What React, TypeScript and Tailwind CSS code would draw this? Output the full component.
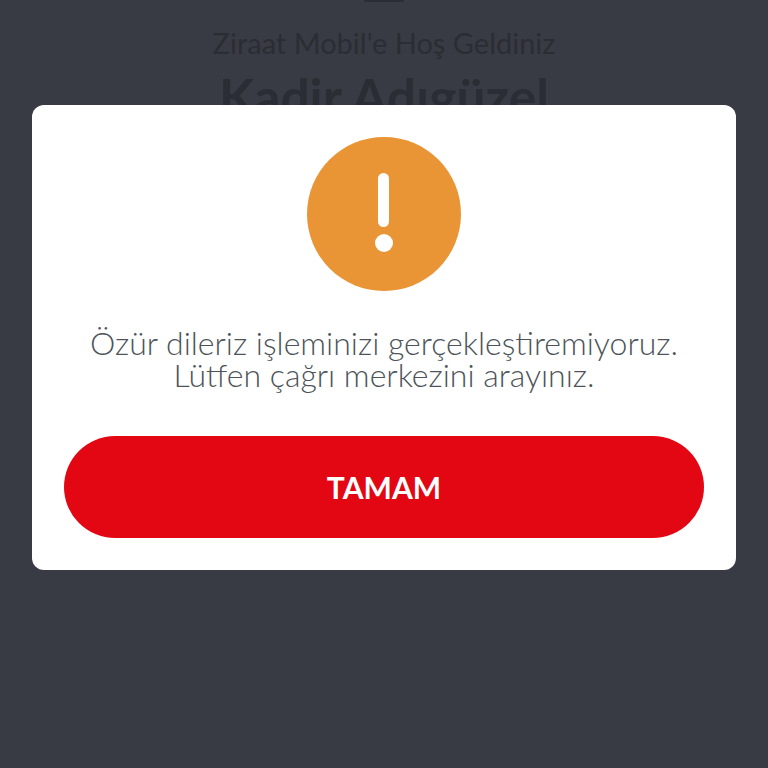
import React from 'react';

const App = () => {
  return (
    <div className="relative h-[768px] w-[768px] overflow-hidden bg-[#383b43] font-['Lato',sans-serif]">
      {/* Dimmed welcome screen behind the dialog */}
      <div className="flex flex-col items-center text-[#2b2d34]">
        <div className="h-[2px] w-[40px] bg-[#2b2d34]" />
        <p className="mt-[23px] text-[29px] leading-[36px] font-normal">Ziraat Mobil'e Hoş Geldiniz</p>
        <p className="mt-[4px] text-[51.5px] leading-[62px] font-bold">Kadir Adıgüzel</p>
      </div>

      {/* Dialog */}
      <div className="absolute inset-0 flex justify-center pt-[105px]">
        <div className="flex h-[465px] w-[704px] flex-col items-center rounded-[12px] bg-white px-[32px] pt-[32px]">
          <div className="flex h-[154px] w-[154px] flex-col items-center rounded-full bg-[#e99535] pt-[36px] pr-[1px]">
            <div className="h-[54px] w-[11px] rounded-full bg-white" />
            <div className="mt-[7px] h-[18px] w-[18px] rounded-full bg-white" />
          </div>
          <p className="mt-[36px] text-center text-[32px] leading-[32px] font-light text-[#4d5359]">
            Özür dileriz işleminizi gerçekleştiremiyoruz.
            <br />
            Lütfen çağrı merkezini arayınız.
          </p>
          <button className="mt-[45px] flex h-[102px] w-[640px] items-center justify-center rounded-full bg-[#e30613] text-[30px] font-bold text-white">
            TAMAM
          </button>
        </div>
      </div>
    </div>
  );
};

export default App;
